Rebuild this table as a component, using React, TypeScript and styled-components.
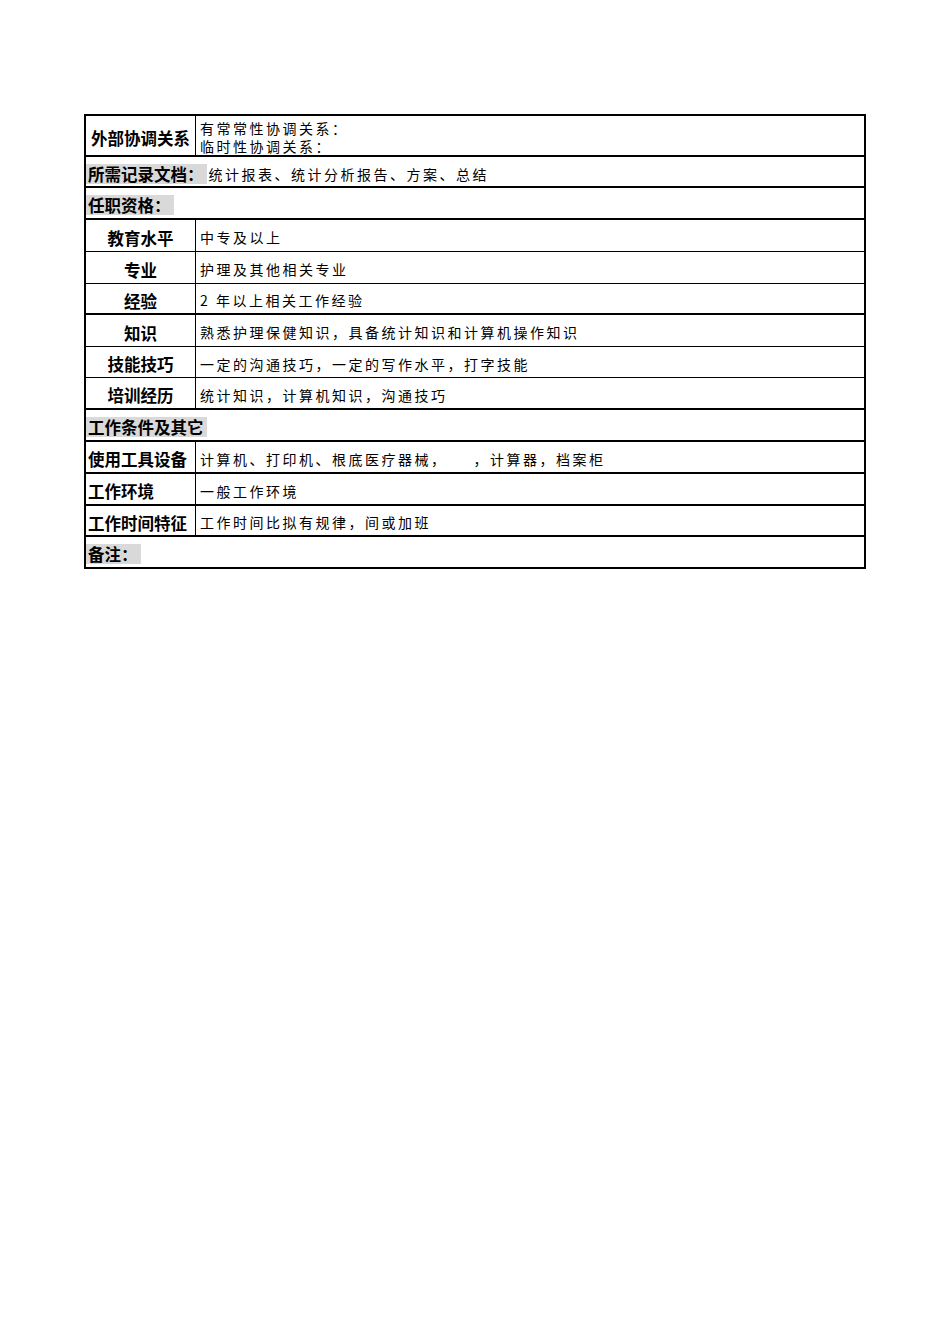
import React from 'react';
import styled, { createGlobalStyle } from 'styled-components';

const GlobalStyle = createGlobalStyle`
	html, body {
		margin: 0;
		padding: 0;
		background: #ffffff;
	}
	body {
		font-family: 'Noto Sans CJK SC', 'Noto Sans', sans-serif;
		color: #000;
	}
`;

const Page = styled.div`
	width: 950px;
	min-height: 1344px;
	padding: 114px 0 0 84px;
	box-sizing: border-box;
`;

const Sheet = styled.div`
	width: 782px;
	border: 2px solid #000;
	border-bottom-width: 0;
	box-sizing: border-box;
	display: flex;
	flex-direction: column;
`;

interface RowProps {
	h: number;
	thick?: boolean;
}

const Row = styled.div<RowProps>`
	display: flex;
	height: ${(p) => p.h}px;
	border-bottom: ${(p) => (p.thick ? 2 : 1.5)}px solid #000;
	box-sizing: border-box;
	align-items: stretch;
`;

interface LabelProps {
	center?: boolean;
}

const Label = styled.div<LabelProps>`
	width: 110px;
	flex: none;
	border-right: 1px solid #000;
	box-sizing: border-box;
	display: flex;
	align-items: center;
	justify-content: ${(p) => (p.center ? 'center' : 'flex-start')};
	padding-left: ${(p) => (p.center ? 0 : 2)}px;
	font-size: 16.5px;
	font-weight: 700;
	white-space: nowrap;
	line-height: 1;
	padding-top: 5px;
`;

const Value = styled.div`
	flex: 1;
	display: flex;
	flex-direction: column;
	justify-content: center;
	padding-left: 4px;
	padding-top: 3px;
	font-size: 14px;
	letter-spacing: 2.5px;
	line-height: 18px;
	color: #000;
	white-space: nowrap;
`;

const Section = styled.div`
	flex: 1;
	display: flex;
	align-items: center;
	padding-top: 4px;
	white-space: nowrap;
`;

const Tag = styled.span`
	background: #d9d9d9;
	font-size: 16.5px;
	font-weight: 700;
	line-height: 20px;
	padding: 0 3px 0 2px;
`;

const Inline = styled.span`
	font-size: 14px;
	letter-spacing: 2.5px;
	color: #000;
	padding-left: 2px;
`;

const quals = [
	{ label: '教育水平', value: '中专及以上', h: 32 },
	{ label: '专业', value: '护理及其他相关专业', h: 32 },
	{ label: '经验', value: '2 年以上相关工作经验', h: 31, thick: true },
	{ label: '知识', value: '熟悉护理保健知识，具备统计知识和计算机操作知识', h: 32 },
	{ label: '技能技巧', value: '一定的沟通技巧，一定的写作水平，打字技能', h: 31 },
	{ label: '培训经历', value: '统计知识，计算机知识，沟通技巧', h: 32, thick: true },
];

const conditions = [
	{ label: '使用工具设备', value: '计算机、打印机、根底医疗器械，　　，计算器，档案柜', h: 32 },
	{ label: '工作环境', value: '一般工作环境', h: 32 },
	{ label: '工作时间特征', value: '工作时间比拟有规律，间或加班', h: 31 },
];

export default function App() {
	return (
		<Page>
			<GlobalStyle />
			<Sheet>
				<Row h={41} thick>
					<Label center>外部协调关系</Label>
					<Value>
						<span>有常常性协调关系：</span>
						<span>临时性协调关系：</span>
					</Value>
				</Row>
				<Row h={31} thick>
					<Section>
						<Tag>所需记录文档：</Tag>
						<Inline>统计报表、统计分析报告、方案、总结</Inline>
					</Section>
				</Row>
				<Row h={32} thick>
					<Section>
						<Tag>任职资格：</Tag>
					</Section>
				</Row>
				{quals.map((q) => (
					<Row key={q.label} h={q.h} thick={q.thick}>
						<Label center>{q.label}</Label>
						<Value>{q.value}</Value>
					</Row>
				))}
				<Row h={32} thick>
					<Section>
						<Tag>工作条件及其它</Tag>
					</Section>
				</Row>
				{conditions.map((c) => (
					<Row key={c.label} h={c.h} thick>
						<Label>{c.label}</Label>
						<Value>{c.value}</Value>
					</Row>
				))}
				<Row h={32} thick>
					<Section>
						<Tag>备注：</Tag>
					</Section>
				</Row>
			</Sheet>
		</Page>
	);
}
